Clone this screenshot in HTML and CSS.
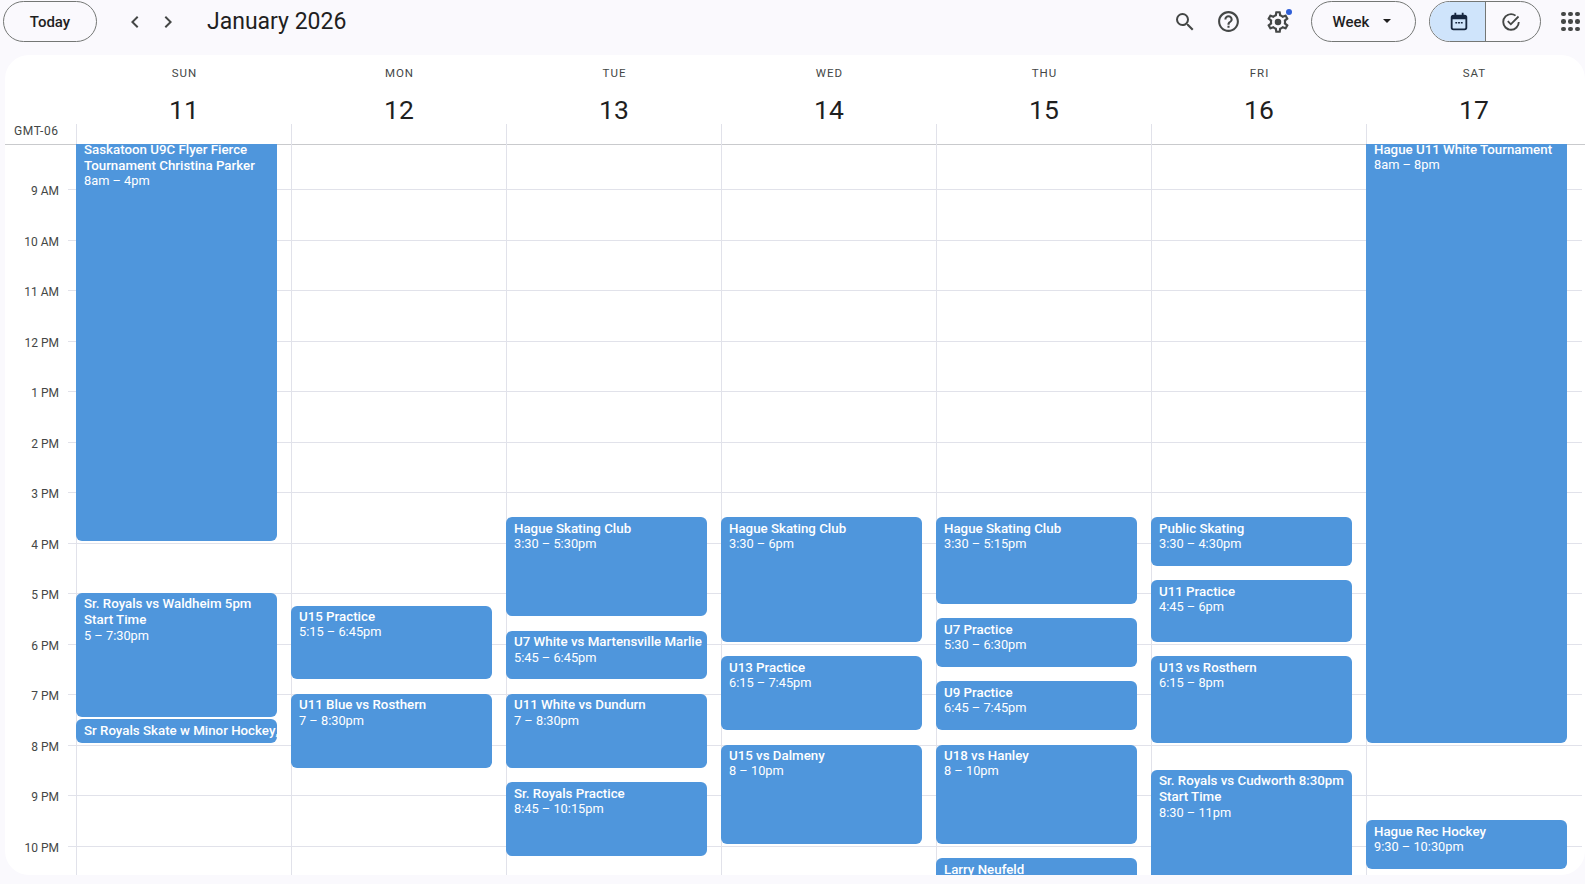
FILE: index.html
```html
<!doctype html>
<html lang="en">
  <head>
    <meta charset="UTF-8" />
    <title>January 2026 - Calendar</title>
    <link rel="stylesheet" href="styles.css">
  </head>
  <body>
    <header class="topbar">
      <button class="pill today">Today</button>
      <button class="icon-btn nav-first">
        <svg viewBox="0 0 24 24" width="24" height="24"><path d="M15.4 7.4 14 6l-6 6 6 6 1.4-1.4-4.6-4.6z"/></svg>
      </button>
      <button class="icon-btn nav-next">
        <svg viewBox="0 0 24 24" width="24" height="24"><path d="M8.6 7.4 10 6l6 6-6 6-1.4-1.4 4.6-4.6z"/></svg>
      </button>
      <div class="title">January 2026</div>

      <button class="icon-btn search">
        <svg viewBox="0 0 24 24" width="24" height="24"><path d="M15.5 14h-.79l-.28-.27A6.471 6.471 0 0 0 16 9.5 6.5 6.5 0 1 0 9.5 16c1.61 0 3.09-.59 4.23-1.57l.27.28v.79l5 4.99L20.49 19l-4.99-5zm-6 0C7.01 14 5 11.99 5 9.5S7.01 5 9.5 5 14 7.01 14 9.5 11.99 14 9.5 14z"/></svg>
      </button>
      <button class="icon-btn help">
        <svg viewBox="0 0 24 24" width="25" height="25"><path d="M11 18h2v-2h-2v2zm1-16C6.48 2 2 6.48 2 12s4.48 10 10 10 10-4.48 10-10S17.52 2 12 2zm0 18c-4.41 0-8-3.59-8-8s3.59-8 8-8 8 3.59 8 8-3.59 8-8 8zm0-14c-2.21 0-4 1.79-4 4h2c0-1.1.9-2 2-2s2 .9 2 2c0 2-3 1.75-3 5h2c0-2.25 3-2.5 3-5 0-2.21-1.79-4-4-4z"/></svg>
      </button>
      <button class="icon-btn gear">
        <svg viewBox="0 0 24 24" width="26" height="26"><path d="M19.43 12.98c.04-.32.07-.64.07-.98 0-.34-.03-.66-.07-.98l2.11-1.65c.19-.15.24-.42.12-.64l-2-3.46c-.09-.16-.26-.25-.44-.25-.06 0-.12.01-.17.03l-2.49 1c-.52-.4-1.08-.73-1.69-.98l-.38-2.65C14.46 2.18 14.25 2 14 2h-4c-.25 0-.46.18-.49.42l-.38 2.65c-.61.25-1.17.59-1.69.98l-2.49-1c-.06-.02-.12-.03-.18-.03-.17 0-.34.09-.43.25l-2 3.46c-.13.22-.07.49.12.64l2.11 1.65c-.04.32-.07.65-.07.98 0 .33.03.66.07.98l-2.11 1.65c-.19.15-.24.42-.12.64l2 3.46c.09.16.26.25.44.25.06 0 .12-.01.17-.03l2.49-1c.52.4 1.08.73 1.69.98l.38 2.65c.03.24.24.42.49.42h4c.25 0 .46-.18.49-.42l.38-2.65c.61-.25 1.17-.59 1.69-.98l2.49 1c.06.02.12.03.18.03.17 0 .34-.09.43-.25l2-3.46c.12-.22.07-.49-.12-.64l-2.11-1.65zm-1.98-1.71c.04.31.05.52.05.73 0 .21-.02.43-.05.73l-.14 1.13.89.7 1.08.84-.7 1.21-1.27-.51-1.04-.42-.9.68c-.43.32-.84.56-1.25.73l-1.06.43-.16 1.13-.2 1.35h-1.4l-.19-1.35-.16-1.13-1.06-.43c-.43-.18-.83-.41-1.23-.71l-.91-.7-1.06.43-1.27.51-.7-1.21 1.08-.84.89-.7-.14-1.13c-.03-.31-.05-.54-.05-.74s.02-.43.05-.73l.14-1.13-.89-.7-1.08-.84.7-1.21 1.27.51 1.04.42.9-.68c.43-.32.84-.56 1.25-.73l1.06-.43.16-1.13.2-1.35h1.39l.19 1.35.16 1.13 1.06.43c.43.18.83.41 1.23.71l.91.7 1.06-.43 1.27-.51.7 1.21-1.07.85-.89.7.14 1.13z"/><circle cx="12" cy="12" r="3"/></svg>
        <span class="badge"></span>
      </button>
      <button class="pill week">Week <span class="caret"></span></button>
      <div class="toggle">
        <button class="toggle-btn active">
          <svg viewBox="0 0 24 24" width="22" height="22" class="dark"><path d="M6 4h1V2h2v2h6V2h2v2h1a3 3 0 0 1 3 3v11a3 3 0 0 1-3 3H6a3 3 0 0 1-3-3V7a3 3 0 0 1 3-3zM5 9v9a1 1 0 0 0 1 1h12a1 1 0 0 0 1-1V9zm3 3h2v1.500H8zm3 0h2v1.500h-2zm3 0h2v1.500h-2z" fill-rule="evenodd"/></svg>
        </button>
        <button class="toggle-btn tasks">
          <svg viewBox="0 0 24 24" width="22" height="22"><path d="M12 2.500a9.500 9.500 0 0 1 5.600 1.800l-1.300 1.500A7.500 7.500 0 1 0 19.500 12h2A9.500 9.500 0 1 1 12 2.500z"/><path d="m7.800 11.800 1.400-1.400 2.600 2.600 7.700-7.700 1.400 1.400-9.100 9.100z"/></svg>
        </button>
      </div>
      <button class="apps">
        <span></span><span></span><span></span><span></span><span></span><span></span><span></span><span></span><span></span>
      </button>
    </header>

    <main class="card">
      <div class="week-head">
        <div class="tz">GMT-06</div>
        <div class="day-head"><div class="dow">SUN</div><div class="num">11</div><div class="tick"></div></div>
        <div class="day-head"><div class="dow">MON</div><div class="num">12</div><div class="tick"></div></div>
        <div class="day-head"><div class="dow">TUE</div><div class="num">13</div><div class="tick"></div></div>
        <div class="day-head"><div class="dow">WED</div><div class="num">14</div><div class="tick"></div></div>
        <div class="day-head"><div class="dow">THU</div><div class="num">15</div><div class="tick"></div></div>
        <div class="day-head"><div class="dow">FRI</div><div class="num">16</div><div class="tick"></div></div>
        <div class="day-head"><div class="dow">SAT</div><div class="num">17</div><div class="tick"></div></div>
      </div>

      <div class="week-body">
        <div class="hours">
          <div class="hour first"><span class="hour-label">9 AM</span><span class="hour-line"></span></div>
          <div class="hour"><span class="hour-label">10 AM</span><span class="hour-line"></span></div>
          <div class="hour"><span class="hour-label">11 AM</span><span class="hour-line"></span></div>
          <div class="hour"><span class="hour-label">12 PM</span><span class="hour-line"></span></div>
          <div class="hour"><span class="hour-label">1 PM</span><span class="hour-line"></span></div>
          <div class="hour"><span class="hour-label">2 PM</span><span class="hour-line"></span></div>
          <div class="hour"><span class="hour-label">3 PM</span><span class="hour-line"></span></div>
          <div class="hour"><span class="hour-label">4 PM</span><span class="hour-line"></span></div>
          <div class="hour"><span class="hour-label">5 PM</span><span class="hour-line"></span></div>
          <div class="hour"><span class="hour-label">6 PM</span><span class="hour-line"></span></div>
          <div class="hour"><span class="hour-label">7 PM</span><span class="hour-line"></span></div>
          <div class="hour"><span class="hour-label">8 PM</span><span class="hour-line"></span></div>
          <div class="hour"><span class="hour-label">9 PM</span><span class="hour-line"></span></div>
          <div class="hour"><span class="hour-label">10 PM</span><span class="hour-line"></span></div>
        </div>

        <div class="days">
          <div class="day">
            <div class="event" style="--start:8;--end:16"><b>Saskatoon U9C Flyer Fierce Tournament Christina Parker</b><span>8am – 4pm</span></div>
            <div class="event" style="--start:17;--end:19.5"><b>Sr. Royals vs Waldheim 5pm Start Time</b><span>5 – 7:30pm</span></div>
            <div class="event one-line" style="--start:19.5;--end:20"><b>Sr Royals Skate w Minor Hockey</b>, 7:30 – 8pm</div>
          </div>
          <div class="day">
            <div class="event" style="--start:17.25;--end:18.75"><b>U15 Practice</b><span>5:15 – 6:45pm</span></div>
            <div class="event" style="--start:19;--end:20.5"><b>U11 Blue vs Rosthern</b><span>7 – 8:30pm</span></div>
          </div>
          <div class="day">
            <div class="event" style="--start:15.5;--end:17.5"><b>Hague Skating Club</b><span>3:30 – 5:30pm</span></div>
            <div class="event" style="--start:17.75;--end:18.75"><b>U7 White vs Martensville Marlie</b><span>5:45 – 6:45pm</span></div>
            <div class="event" style="--start:19;--end:20.5"><b>U11 White vs Dundurn</b><span>7 – 8:30pm</span></div>
            <div class="event" style="--start:20.75;--end:22.25"><b>Sr. Royals Practice</b><span>8:45 – 10:15pm</span></div>
          </div>
          <div class="day">
            <div class="event" style="--start:15.5;--end:18"><b>Hague Skating Club</b><span>3:30 – 6pm</span></div>
            <div class="event" style="--start:18.25;--end:19.75"><b>U13 Practice</b><span>6:15 – 7:45pm</span></div>
            <div class="event" style="--start:20;--end:22"><b>U15 vs Dalmeny</b><span>8 – 10pm</span></div>
          </div>
          <div class="day">
            <div class="event" style="--start:15.5;--end:17.25"><b>Hague Skating Club</b><span>3:30 – 5:15pm</span></div>
            <div class="event" style="--start:17.5;--end:18.5"><b>U7 Practice</b><span>5:30 – 6:30pm</span></div>
            <div class="event" style="--start:18.75;--end:19.75"><b>U9 Practice</b><span>6:45 – 7:45pm</span></div>
            <div class="event" style="--start:20;--end:22"><b>U18 vs Hanley</b><span>8 – 10pm</span></div>
            <div class="event" style="--start:22.25;--end:23.25"><b>Larry Neufeld</b></div>
          </div>
          <div class="day">
            <div class="event" style="--start:15.5;--end:16.5"><b>Public Skating</b><span>3:30 – 4:30pm</span></div>
            <div class="event" style="--start:16.75;--end:18"><b>U11 Practice</b><span>4:45 – 6pm</span></div>
            <div class="event" style="--start:18.25;--end:20"><b>U13 vs Rosthern</b><span>6:15 – 8pm</span></div>
            <div class="event" style="--start:20.5;--end:23"><b>Sr. Royals vs Cudworth 8:30pm Start Time</b><span>8:30 – 11pm</span></div>
          </div>
          <div class="day">
            <div class="event" style="--start:8;--end:20"><b>Hague U11 White Tournament</b><span>8am – 8pm</span></div>
            <div class="event" style="--start:21.5;--end:22.5"><b>Hague Rec Hockey</b><span>9:30 – 10:30pm</span></div>
          </div>
        </div>
      </div>
    </main>
  </body>
</html>
```

FILE: styles.css
```css
* {
  box-sizing: border-box;
}
body {
  margin: 0;
  height: 884px;
  overflow: hidden;
  background: #faf9fd;
  font-family: Roboto, "Liberation Sans", sans-serif;
  color: #1f1f1f;
}
button {
  font: inherit;
  color: inherit;
  background: none;
  border: none;
  padding: 0;
}
svg {
  fill: #444746;
  display: block;
}

/* top bar */
.topbar {
  display: flex;
  align-items: center;
  height: 55px;
  padding: 0 3px 12px 3px;
}
.pill {
  height: 41px;
  border: 1px solid #747775;
  border-radius: 21px;
  font-size: 15px;
  color: #1f1f1f;
}
.today {
  width: 94px;
  font-weight: 500;
}
.icon-btn {
  position: relative;
  display: flex;
  align-items: center;
  justify-content: center;
  width: 32px;
  height: 32px;
}
.nav-first {
  margin-left: 22px;
}
.nav-next {
  margin-left: 1px;
}
.title {
  margin-left: 23px;
  font-size: 23px;
  line-height: 32px;
}
.search {
  margin-left: auto;
}
.help {
  margin-left: 11px;
}
.gear {
  margin-left: 18px;
}
.badge {
  position: absolute;
  top: 3px;
  left: 24px;
  width: 6px;
  height: 6px;
  border-radius: 50%;
  background: #2f5fd8;
}
.week {
  display: flex;
  align-items: center;
  justify-content: center;
  gap: 14px;
  width: 105px;
  margin-left: 17px;
  font-weight: 500;
  padding-right: 3px;
}
.caret {
  width: 0;
  height: 0;
  border-left: 4.5px solid transparent;
  border-right: 4.5px solid transparent;
  border-top: 4.5px solid #1f1f1f;
  margin-bottom: 2px;
}
.toggle {
  display: flex;
  width: 112px;
  height: 41px;
  margin-left: 13px;
  border: 1px solid #747775;
  border-radius: 21px;
  overflow: hidden;
}
.toggle-btn {
  display: flex;
  align-items: center;
  justify-content: center;
  flex: 1;
}
.toggle-btn.active {
  flex: 0 0 56px;
  padding-left: 3px;
  background: #cfe4fb;
  border-right: 1px solid #747775;
}
.toggle-btn.tasks {
  padding-right: 4px;
}
.toggle-btn svg.dark {
  fill: #16263f;
}
.apps {
  display: grid;
  grid-template-columns: repeat(3, 4px);
  gap: 3px;
  width: 18px;
  margin-left: 20px;
  margin-right: 3px;
}
.apps span {
  width: 4.5px;
  height: 4.5px;
  border-radius: 50%;
  background: #444746;
}

/* calendar card */
.card {
  height: 820px;
  margin-left: 5px;
  border-radius: 24px;
  background: #fff;
  overflow: hidden;
}
.week-head {
  position: relative;
  display: grid;
  grid-template-columns: 71px repeat(7, 215px);
  height: 89px;
}
.tz {
  align-self: end;
  padding: 0 0 5px 9px;
  font-size: 12px;
  line-height: 16px;
  letter-spacing: 0.6px;
  color: #444746;
}
.day-head {
  display: flex;
  flex-direction: column;
  align-items: center;
  padding-top: 11px;
}
.dow {
  padding-left: 2px;
  font-size: 11.5px;
  line-height: 14px;
  letter-spacing: 1px;
  color: #444746;
}
.num {
  padding-left: 1px;
  margin-top: 11px;
  font-size: 26.5px;
  line-height: 38px;
  height: 33px;
  color: #1f1f1f;
}
.tick {
  align-self: stretch;
  flex: 1;
  border-left: 1px solid #e1e2ea;
}

/* hours and day columns share one grid cell */
.week-body {
  display: grid;
  height: 731px;
  overflow: hidden;
}
.hours,
.days {
  grid-area: 1 / 1;
}
.hours {
  border-top: 1px solid #c9cacd;
}
.hour {
  display: flex;
  height: 50.5px;
}
.hour.first {
  height: 45px;
}
.hour-label {
  flex: 0 0 54px;
  align-self: flex-end;
  transform: translateY(8.5px);
  font-size: 12px;
  line-height: 16px;
  text-align: right;
  color: #444746;
}
.hour-line {
  flex: 1;
  margin: 0 3px 0 9px;
  border-bottom: 1px solid #e1e2ea;
}
.days {
  display: grid;
  grid-template-columns: repeat(7, 215px);
  padding-left: 71px;
}
.day {
  position: relative;
  border-left: 1px solid #e1e2ea;
}

/* events, placed by their start and end hour */
.event {
  position: absolute;
  left: -1px;
  width: 201px;
  top: calc((var(--start) - 8) * 50.5px - 5.5px);
  height: calc((var(--end) - var(--start)) * 50.5px - 2px);
  padding: 3.4px 2px 0 8px;
  border-radius: 6px;
  background: #4f96dc;
  color: #fff;
  font-size: 12.8px;
  line-height: 16px;
  overflow: hidden;
}
.event b {
  display: block;
  font-size: 13.3px;
  font-weight: 500;
}
.event span {
  display: block;
  margin-top: -0.6px;
}
.event.one-line {
  padding-right: 0;
  white-space: nowrap;
}
.event.one-line b {
  display: inline;
}
```
